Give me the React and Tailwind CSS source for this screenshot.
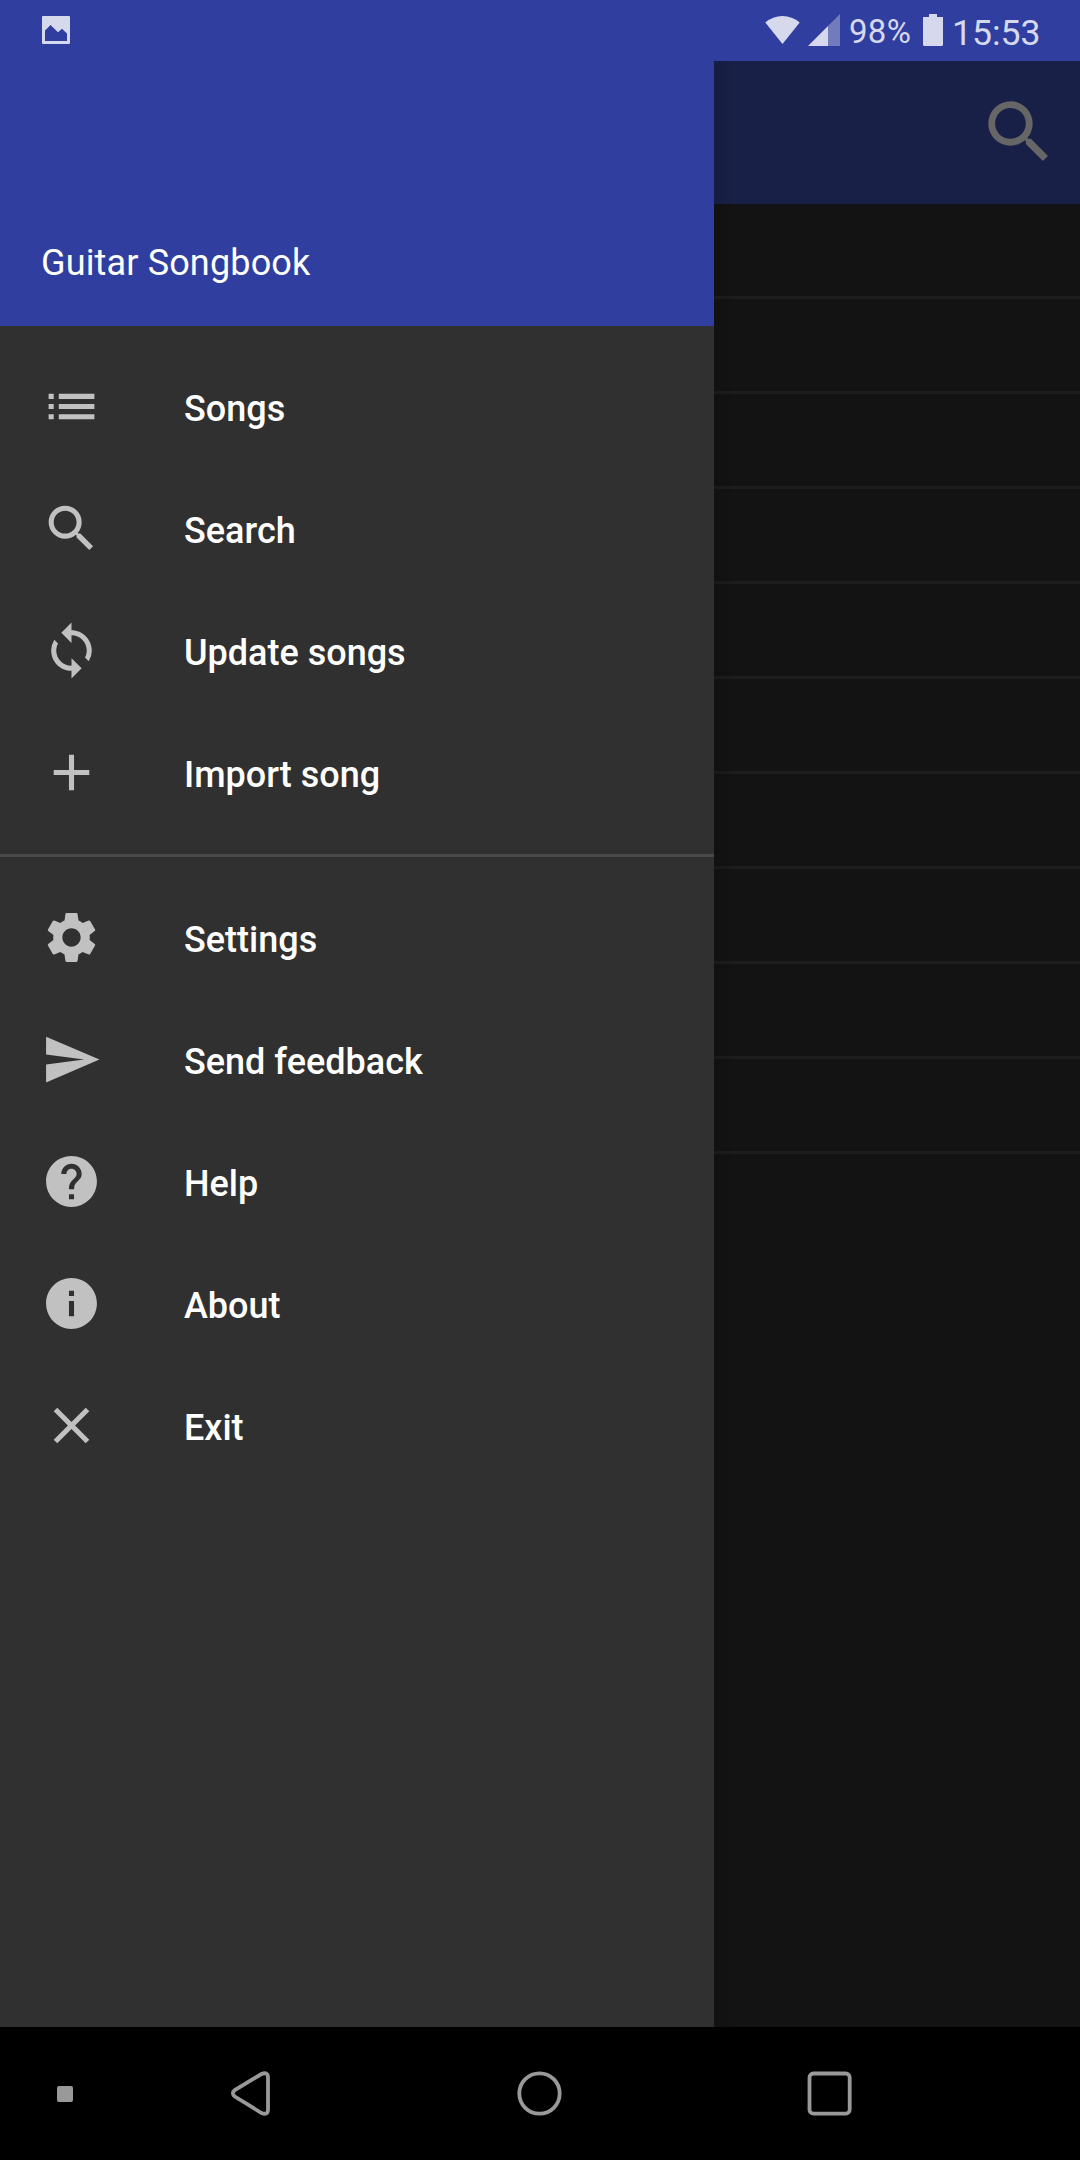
import React from "react";
import {
  MdList,
  MdSearch,
  MdSync,
  MdAdd,
  MdSettings,
  MdSend,
  MdHelp,
  MdInfo,
  MdClose,
} from "react-icons/md";

const primaryItems = [
  { label: "Songs", Icon: MdList },
  { label: "Search", Icon: MdSearch },
  { label: "Update songs", Icon: MdSync },
  { label: "Import song", Icon: MdAdd },
];

const secondaryItems = [
  { label: "Settings", Icon: MdSettings },
  { label: "Send feedback", Icon: MdSend },
  { label: "Help", Icon: MdHelp },
  { label: "About", Icon: MdInfo },
  { label: "Exit", Icon: MdClose },
];

const rows = Array.from({ length: 10 }, (_, i) => i);

function StatusBar() {
  return (
    <header className="flex h-[61px] shrink-0 items-start bg-[#303f9f] pl-[42px] pr-[39px] text-[#d6d9ec]">
      <svg className="mt-[16px] h-[28px] w-[28px]" viewBox="0 0 28 28" fill="currentColor">
        <path
          fillRule="evenodd"
          d="M1 0h26a1 1 0 0 1 1 1v26a1 1 0 0 1-1 1H1a1 1 0 0 1-1-1V1a1 1 0 0 1 1-1ZM3 14.500V25h22v-7.500l-5-4.700-4 3.400-7.500-7.200Z"
        />
      </svg>
      <div className="flex-1" />
      <svg className="mt-[16px] h-[28px] w-[35px]" viewBox="0 0 35 28" fill="currentColor">
        <path d="M.3 6.500Q8 0 17.500 0T34.700 6.500L17.500 28Z" />
      </svg>
      <svg className="ml-[8px] mt-[14px] h-[32px] w-[32px]" viewBox="0 0 32 32" fill="currentColor">
        <path d="M20 12 32 0v32H20Z" opacity="0.4" />
        <path d="M0 32 20 12v20Z" />
      </svg>
      <span className="ml-[9px] mt-[12px] w-[62px] whitespace-nowrap text-[33px] leading-[39px] tracking-[0.3px]">98%</span>
      <svg className="ml-[12px] mt-[14px] h-[32px] w-[20px]" viewBox="0 0 20 32" fill="currentColor">
        <path d="M6 0h8v3h6v27.500a1.500 1.500 0 0 1-1.500 1.500h-17A1.500 1.500 0 0 1 0 30.500V3h6Z" />
      </svg>
      <span className="ml-[9px] mt-[12px] w-[89px] whitespace-nowrap text-[35.6px] leading-[43px]">15:53</span>
    </header>
  );
}

function DrawerItem({ label, Icon }) {
  return (
    <li className="flex h-[122px] items-center pl-[41px] pt-px">
      <Icon className="h-[61px] w-[61px] text-[#c1c1c1]" />
      <span className="ml-[82px] mt-[5px] whitespace-nowrap text-[36px] font-medium leading-[42px] text-white">
        {label}
      </span>
    </li>
  );
}

function Drawer() {
  return (
    <aside className="flex w-[714px] shrink-0 flex-col bg-[#303030]">
      <div className="flex h-[265px] flex-col justify-end bg-[#303f9f] pb-[42px] pl-[41px]">
        <h1 className="text-[36px] font-normal leading-[42px] tracking-[0.15px] text-white">Guitar Songbook</h1>
      </div>
      <nav>
        <ul className="pb-[21px] pt-[19px]">
          {primaryItems.map((item) => (
            <DrawerItem key={item.label} {...item} />
          ))}
        </ul>
        <div className="h-[3px] bg-[#494949]" />
        <ul className="pt-[19px]">
          {secondaryItems.map((item) => (
            <DrawerItem key={item.label} {...item} />
          ))}
        </ul>
      </nav>
    </aside>
  );
}

function DimmedPage() {
  return (
    <main className="relative flex-1 bg-[#131313]">
      <div className="flex h-[143px] items-center justify-end bg-[#192048] pr-[20px]">
        <MdSearch className="mb-[2px] h-[82px] w-[82px] text-[#666666]" />
      </div>
      {rows.map((row) => (
        <div key={row} className="h-[95px] border-b-[3px] border-[#1d1d1d]" />
      ))}
      <div className="absolute inset-y-0 left-0 w-[22px] bg-linear-to-r from-black/12 to-transparent" />
    </main>
  );
}

function SystemNav() {
  return (
    <footer className="flex h-[133px] shrink-0 items-center bg-black pl-[57px] text-[#999999]">
      <div className="mt-px h-[16px] w-[16px] rounded-[2px] bg-[#999999]" />
      <svg
        className="ml-[157px] h-[45px] w-[42px]"
        viewBox="0 0 42 45"
        fill="none"
        stroke="currentColor"
        strokeWidth="3.800"
      >
        <path d="M31.500 3 4.800 19Q1 22.200 4.800 25.500L31.500 42Q38 44.500 38 38.500V6.500Q38 .5 31.500 3Z" />
      </svg>
      <svg className="ml-[245px] h-[45px] w-[45px]" viewBox="0 0 45 45" fill="none" stroke="currentColor" strokeWidth="3.800">
        <circle cx="22.500" cy="22.500" r="20.200" />
      </svg>
      <svg className="ml-[245px] h-[45px] w-[45px]" viewBox="0 0 45 45" fill="none" stroke="currentColor" strokeWidth="3.800">
        <rect x="2.500" y="2.500" width="40.200" height="40.200" rx="4" />
      </svg>
    </footer>
  );
}

export default function App() {
  return (
    <div className="flex h-[2160px] w-[1080px] flex-col overflow-hidden bg-black font-['Roboto',sans-serif]">
      <StatusBar />
      <div className="flex min-h-0 flex-1">
        <Drawer />
        <DimmedPage />
      </div>
      <SystemNav />
    </div>
  );
}
